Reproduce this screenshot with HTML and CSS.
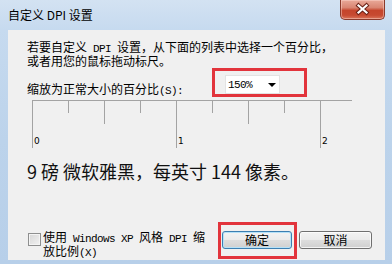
FILE: index.html
```html
<!DOCTYPE html>
<html lang="zh-CN">
<head>
<meta charset="utf-8">
<title>自定义 DPI 设置</title>
<link rel="stylesheet" href="styles.css">
</head>
<body>
<div class="window">
  <div class="titlebar">
    <div class="title">自定义 DPI 设置</div>
    <div class="close">
      <svg width="45" height="20" viewBox="0 0 45 20">
        <g transform="translate(22.5 10)" fill="none" stroke-linecap="square">
          <path d="M-4 -3.5 L4 3.5 M4 -3.5 L-4 3.5" stroke="#6b2217" stroke-width="4.2"/>
          <path d="M-4 -3.5 L4 3.5 M4 -3.5 L-4 3.5" stroke="#ffffff" stroke-width="2.2"/>
        </g>
      </svg>
    </div>
  </div>
  <div class="content">
    <p class="intro">若要自定义<span class="lat"> DPI </span>设置，从下面的列表中选择一个百分比，<br>或者用您的鼠标拖动标尺。</p>
    <div class="scale-row">
      <label class="scale-label">缩放为正常大小的百分比<span class="lat">(S):</span></label>
      <div class="mark mark-combo">
        <div class="combo"><span class="lat">150%</span><span class="arrow"></span></div>
      </div>
    </div>
    <svg class="ruler" width="320" height="48" viewBox="0 0 320 48">
      <g stroke="#a3a3a3" stroke-width="1" shape-rendering="crispEdges">
        <line x1="0" y1="0.5" x2="320" y2="0.5"/>
        <line x1="0.5" y1="0" x2="0.5" y2="48"/>
        <line x1="36.5" y1="0" x2="36.5" y2="13"/>
        <line x1="72.5" y1="0" x2="72.5" y2="24"/>
        <line x1="108.5" y1="0" x2="108.5" y2="13"/>
        <line x1="144.5" y1="0" x2="144.5" y2="48"/>
        <line x1="180.5" y1="0" x2="180.5" y2="13"/>
        <line x1="216.5" y1="0" x2="216.5" y2="24"/>
        <line x1="252.5" y1="0" x2="252.5" y2="13"/>
        <line x1="288.5" y1="0" x2="288.5" y2="48"/>
      </g>
      <g class="ruler-num">
        <text x="2" y="44">0</text>
        <text x="146" y="44">1</text>
        <text x="290" y="44">2</text>
      </g>
    </svg>
    <div class="info">9 磅 微软雅黑，每英寸 144 像素。</div>
    <div class="bottom">
      <div class="check">
        <span class="box"></span>
        <span class="check-label">使用<span class="lat"> Windows XP </span>风格<span class="lat"> DPI </span>缩<br>放比例<span class="lat">(X)</span></span>
      </div>
      <div class="mark mark-ok"><button class="btn btn-default">确定</button></div>
      <button class="btn btn-cancel">取消</button>
    </div>
  </div>
</div>
</body>
</html>
```

FILE: styles.css
```css
html, body {
  margin: 0;
  padding: 0;
}

body {
  width: 392px;
  height: 264px;
  overflow: hidden;
  font-family: "Noto Sans CJK SC", "Noto Sans", sans-serif;
  color: #000;
}

.window {
  width: 392px;
  height: 264px;
  box-sizing: border-box;
  padding: 0 7px 4px 8px;
  display: flex;
  flex-direction: column;
  background: linear-gradient(to bottom, #d3e2f2 0px, #c6daef 30px, #bcd3eb 140px, #b7cfe9 264px);
}

.titlebar {
  height: 30px;
  flex: 0 0 30px;
  display: flex;
  justify-content: space-between;
  align-items: flex-start;
}

.title {
  margin-top: 7px;
  font-size: 12px;
  line-height: 16px;
  color: #000;
}

.close {
  width: 45px;
  height: 20px;
  box-sizing: border-box;
  border: 1px solid #8a3a2c;
  border-top: none;
  border-radius: 0 0 5px 5px;
  background: linear-gradient(to bottom, #e9a999 0%, #d98572 40%, #c5452c 55%, #c74a31 80%, #d9755b 100%);
  box-shadow: inset 0 0 0 1px rgba(255, 220, 210, 0.45);
}

.close svg {
  display: block;
  margin: -1px 0 0 -1px;
}

.content {
  flex: 1 1 auto;
  background: #f0f0f0;
  display: flex;
  flex-direction: column;
  font-size: 12px;
}

.lat {
  font-family: "Liberation Mono", monospace;
  font-size: 11px;
  letter-spacing: -0.6px;
}

.intro {
  margin: 11px 0 0 19px;
  font-size: 12px;
  line-height: 12px;
}

.scale-row {
  margin-top: 1px;
  display: flex;
  align-items: flex-start;
}

.scale-label {
  flex: 0 0 185px;
  margin: 13px 0 0 19px;
  line-height: 16px;
}

.mark {
  box-sizing: border-box;
  border: 3px solid #e2343c;
}

.mark-combo {
  width: 95px;
  height: 29px;
  padding: 4px 0 0 10px;
}

.combo {
  width: 55px;
  height: 19px;
  box-sizing: border-box;
  background: #fff;
  border: 1px solid #e3e3e3;
  display: flex;
  align-items: center;
  padding: 0 0 0 2px;
}

.combo .lat {
  line-height: 12px;
}

.arrow {
  margin-left: auto;
  margin-right: 3px;
  width: 0;
  height: 0;
  border-top: 4px solid #000;
  border-left: 4px solid transparent;
  border-right: 4px solid transparent;
}

.ruler {
  display: block;
  margin: 1px 0 0 24px;
}

.ruler-num text {
  font-family: "DejaVu Sans", sans-serif;
  font-size: 9px;
  fill: #000;
}

.info {
  margin: 11px 0 0 19px;
  font-size: 18px;
  line-height: 24px;
  color: #111;
}

.bottom {
  margin-top: 39px;
  height: 37px;
  display: flex;
  align-items: flex-start;
}

.check {
  margin: 10px 0 0 20px;
  display: flex;
  align-items: flex-start;
}

.box {
  width: 13px;
  height: 13px;
  margin-top: 1px;
  box-sizing: border-box;
  border: 1px solid #8e8f8f;
  background: linear-gradient(135deg, #d6d6d6 0%, #f2f2f2 100%);
  box-shadow: inset 0 0 0 1px #f4f4f4;
}

.check-label {
  margin-left: 2px;
  margin-top: -1px;
  font-size: 12px;
  line-height: 12px;
}

.mark-ok {
  margin-left: auto;
  width: 79px;
  height: 37px;
  padding: 6px 0 0 1px;
}

.btn {
  display: block;
  margin: 0;
  padding: 0;
  height: 18px;
  box-sizing: border-box;
  border: 1px solid #707070;
  border-radius: 3px;
  background: linear-gradient(to bottom, #f3f3f3 0%, #ebebeb 48%, #dddddd 52%, #d0d0d0 100%);
  box-shadow: inset 0 0 0 1px rgba(255, 255, 255, 0.75);
  font-family: "Noto Sans CJK SC", sans-serif;
  font-size: 12px;
  line-height: 16px;
  color: #000;
}

.btn-default {
  width: 70px;
  border-color: #3c7fb1;
  box-shadow: inset 0 0 0 1px #b5e1f8;
}

.btn-cancel {
  width: 73px;
  margin: 9px 13px 0 2px;
}
```
